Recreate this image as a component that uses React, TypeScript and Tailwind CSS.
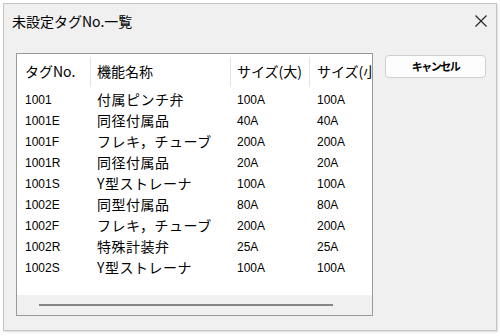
import React from 'react';

const rows = [
  { tag: '1001', name: '付属ピンチ弁', big: '100A', small: '100A' },
  { tag: '1001E', name: '同径付属品', big: '40A', small: '40A' },
  { tag: '1001F', name: 'フレキ，チューブ', big: '200A', small: '200A' },
  { tag: '1001R', name: '同径付属品', big: '20A', small: '20A' },
  { tag: '1001S', name: 'Y型ストレーナ', big: '100A', small: '100A' },
  { tag: '1002E', name: '同型付属品', big: '80A', small: '80A' },
  { tag: '1002F', name: 'フレキ，チューブ', big: '200A', small: '200A' },
  { tag: '1002R', name: '特殊計装弁', big: '25A', small: '25A' },
  { tag: '1002S', name: 'Y型ストレーナ', big: '100A', small: '100A' },
];

const jp = { fontFamily: '"Noto Sans CJK JP", sans-serif' };
const latin = { fontFamily: '"Liberation Sans", "Noto Sans CJK JP", sans-serif' };

const App: React.FC = () => {
  return (
    <div className="w-[500px] h-[336px] bg-white pl-[3px] pt-[3px]">
      <div className="w-[494px] h-[328px] border border-[#c4c4c4] bg-[#f0f0f0] flex flex-col shadow-[1px_1px_2px_rgba(0,0,0,0.15)]">
        <div className="h-[34px] flex items-center justify-between pl-[8px] pr-[9px]" style={jp}>
          <span className="text-[14px] text-black">未設定タグNo.一覧</span>
          <svg width="12" height="12" viewBox="0 0 12 12" className="text-[#222]">
            <path d="M0.5 0.5 L11.5 11.5 M11.5 0.5 L0.5 11.5" stroke="currentColor" strokeWidth="1.1" />
          </svg>
        </div>

        <div className="flex pl-[12px] pt-[15px] gap-[12px]">
          <div className="w-[357px] h-[263px] border border-[#9a9a9a] bg-white flex flex-col overflow-hidden">
            <div className="h-[35px] flex items-center text-[14px] text-black shrink-0" style={jp}>
              <div className="w-[73px] pl-[8px] whitespace-nowrap">タグNo.</div>
              <div className="w-px h-[30px] bg-[#e5e5e5]" />
              <div className="w-[139px] pl-[6px] whitespace-nowrap">機能名称</div>
              <div className="w-px h-[30px] bg-[#e5e5e5]" />
              <div className="w-[78px] pl-[6px] whitespace-nowrap">サイズ(大)</div>
              <div className="w-px h-[30px] bg-[#e5e5e5]" />
              <div className="flex-1 pl-[7px] whitespace-nowrap overflow-hidden">サイズ(小)</div>
            </div>
            <div className="flex-1 flex flex-col">
              {rows.map((r) => (
                <div key={r.tag} className="h-[21px] flex items-center text-black shrink-0">
                  <div className="w-[74px] pl-[8px] text-[12px]" style={latin}>{r.tag}</div>
                  <div className="w-[140px] pl-[6px] text-[14px] tracking-[0.5px] whitespace-nowrap" style={jp}>{r.name}</div>
                  <div className="w-[79px] pl-[6px] text-[12px]" style={latin}>{r.big}</div>
                  <div className="flex-1 pl-[7px] text-[12px]" style={latin}>{r.small}</div>
                </div>
              ))}
            </div>
            <div className="h-[20px] bg-[#f0f0f0] flex items-center pl-[22px] shrink-0">
              <div className="w-[294px] h-[2px] bg-[#858585]" />
            </div>
          </div>

          <button
            className="w-[101px] h-[23px] mt-[2px] rounded-[4px] border border-[#d0d0d0] bg-[#fdfdfd] text-[11px] font-bold tracking-[-1.5px] text-black flex items-center justify-center"
            style={jp}
          >
            キャンセル
          </button>
        </div>
      </div>
    </div>
  );
};

export default App;
